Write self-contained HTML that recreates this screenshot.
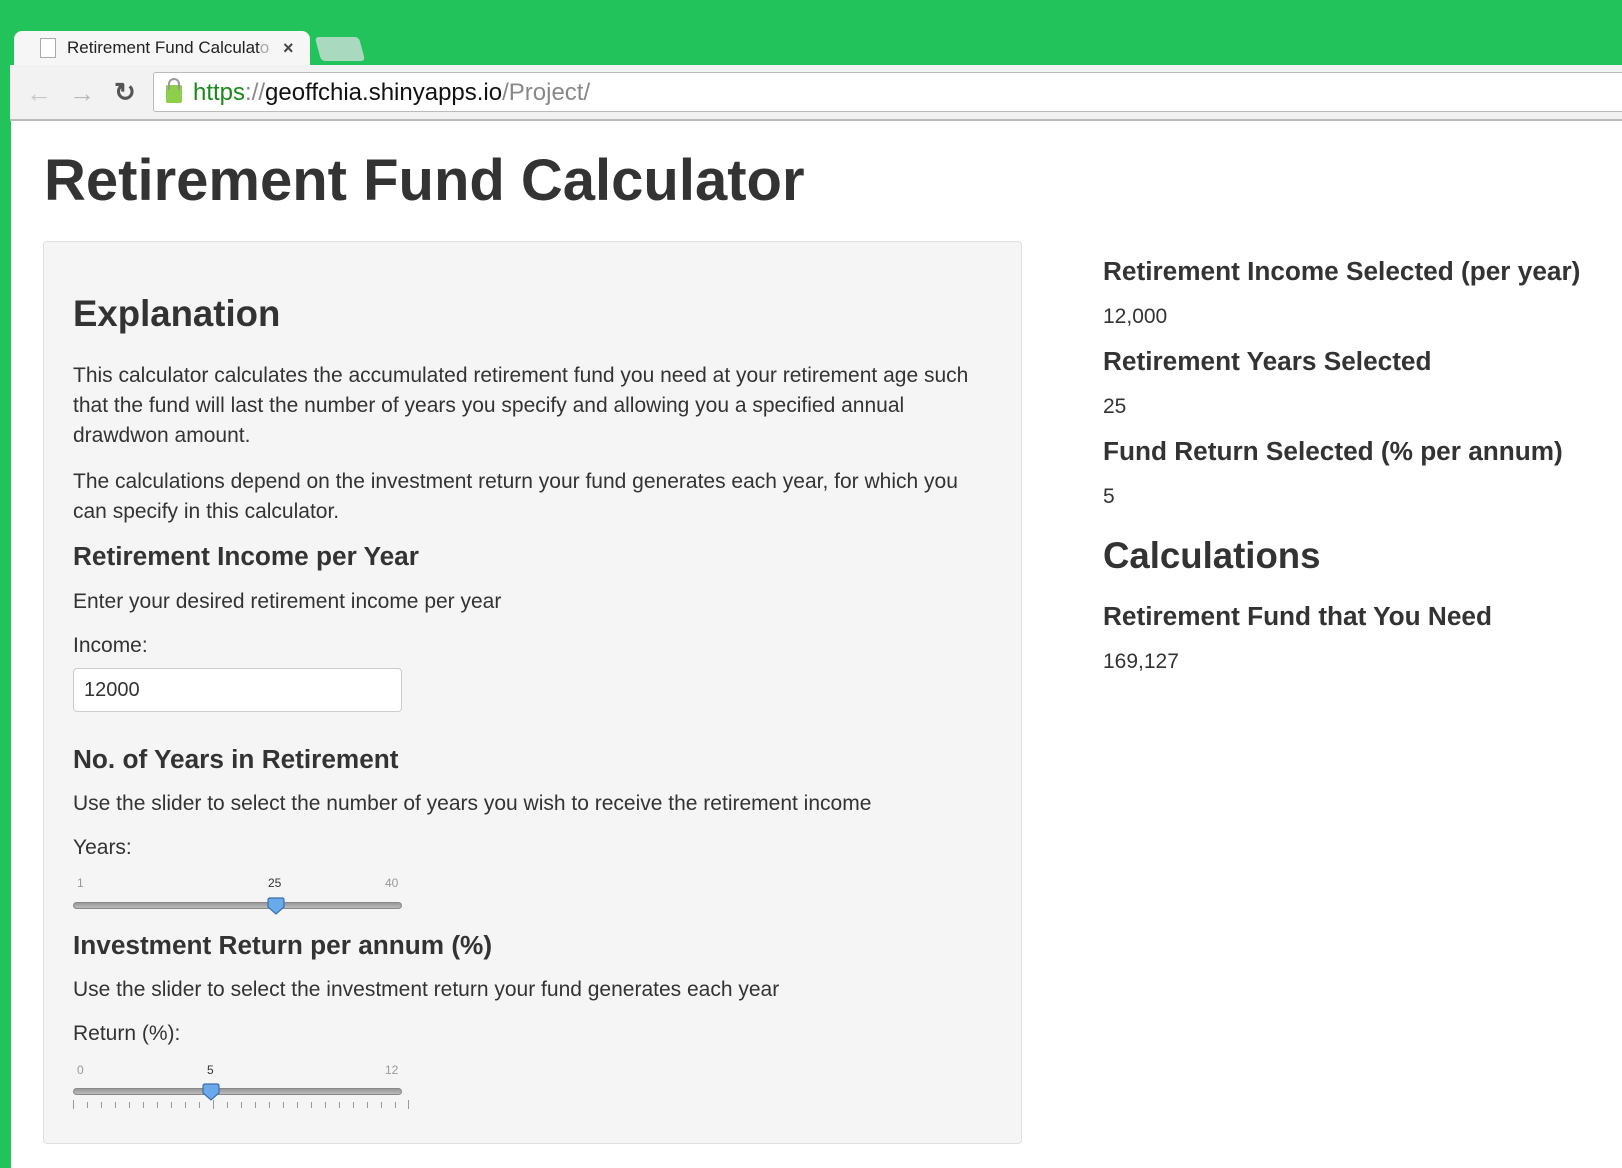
<!DOCTYPE html>
<html><head><meta charset="utf-8"><style>
*{margin:0;padding:0;box-sizing:border-box}
body{width:1622px;height:1168px;overflow:hidden;background:#22c35a;font-family:"Liberation Sans",sans-serif;color:#333;position:relative}
.a{position:absolute;white-space:nowrap}
.p{font-size:21px;line-height:30px;height:30px}
.h3{font-size:26.2px;font-weight:bold;line-height:30px;height:30px}
.h2{font-size:36.6px;font-weight:bold;line-height:44px}
.track{position:absolute;left:73px;width:329px;height:7px;border-radius:4px;background:linear-gradient(#999,#bbb);border:1px solid #888}
.hd{position:absolute;width:18px;height:18px}
.lb{position:absolute;font-size:12px;color:#999;line-height:14px}
</style></head><body>
<!-- tab -->
<div class="a" style="left:14px;top:31px;width:296px;height:36px;background:#f6f6f6;border-radius:8px 8px 0 0"></div>
<div class="a" style="left:40px;top:38px;width:16px;height:20px;border:1px solid #aaa;background:#fff"></div>
<div class="a" style="left:67px;top:36px;font-size:17px;line-height:24px;color:#222">Retirement Fund Calculat<span style="color:#aaa">o</span></div>
<div class="a" style="left:283px;top:36px;font-size:18px;line-height:24px;font-weight:bold;color:#444">×</div>
<div class="a" style="left:318px;top:37px;width:44px;height:24px;background:#a9d9be;border-radius:4px;transform:skewX(15deg)"></div>
<!-- toolbar -->
<div class="a" style="left:10px;top:65px;width:1612px;height:56px;background:#f2f2f2;border-bottom:2px solid #bbb"></div>
<div class="a" style="left:26px;top:78px;font-size:26px;color:#c8c8c8;line-height:30px">←</div>
<div class="a" style="left:69px;top:78px;font-size:26px;color:#b8b8b8;line-height:30px">→</div>
<div class="a" style="left:114px;top:77px;font-size:26px;color:#555;font-weight:bold;line-height:30px">↻</div>
<div class="a" style="left:153px;top:72px;width:1469px;height:40px;background:#fff;border:1px solid #bbb;border-right:none;border-radius:3px 0 0 3px"></div>
<div class="a" style="left:166px;top:85px;width:16px;height:18px;background:#8ccf4a;border-radius:2px"></div>
<div class="a" style="left:168px;top:78px;width:12px;height:12px;border:2px solid #999;border-bottom:none;border-radius:6px 6px 0 0"></div>
<div class="a" style="left:193px;top:78px;font-size:24px;line-height:30px;color:#111"><span style="color:#1a8a1a">https</span><span style="color:#888">://</span>geoffchia.shinyapps.io<span style="color:#888">/Project/</span></div>
<!-- page -->
<div class="a" style="left:11px;top:121px;width:1611px;height:1047px;background:#fff"></div>
<div class="a" style="left:44px;top:145px;font-size:58px;font-weight:bold;line-height:72px">Retirement Fund Calculator</div>
<div class="a" style="left:43px;top:241px;width:979px;height:903px;background:#f5f5f5;border:1px solid #e0e0e0;border-radius:4px"></div>
<div class="a h2" style="left:73px;top:292px">Explanation</div>
<div class="a p" style="left:73px;top:361px">This calculator calculates the accumulated retirement fund you need at your retirement age such</div>
<div class="a p" style="left:73px;top:391px">that the fund will last the number of years you specify and allowing you a specified annual</div>
<div class="a p" style="left:73px;top:421px">drawdwon amount.</div>
<div class="a p" style="left:73px;top:467px">The calculations depend on the investment return your fund generates each year, for which you</div>
<div class="a p" style="left:73px;top:497px">can specify in this calculator.</div>
<div class="a h3" style="left:73px;top:541px">Retirement Income per Year</div>
<div class="a p" style="left:73px;top:587px">Enter your desired retirement income per year</div>
<div class="a p" style="left:73px;top:631px">Income:</div>
<div class="a" style="left:73px;top:668px;width:329px;height:44px;background:#fff;border:1px solid #ccc;border-radius:4px;font-size:20px;line-height:42px;padding-left:10px">12000</div>
<div class="a h3" style="left:73px;top:744px">No. of Years in Retirement</div>
<div class="a p" style="left:73px;top:789px">Use the slider to select the number of years you wish to receive the retirement income</div>
<div class="a p" style="left:73px;top:833px">Years:</div>
<div class="lb" style="left:77px;top:876px">1</div>
<div class="lb" style="left:268px;top:876px;color:#333">25</div>
<div class="lb" style="left:385px;top:876px">40</div>
<div class="track" style="top:902px"></div>
<svg class="hd" style="left:267px;top:897px" viewBox="0 0 18 18"><path d="M1 3Q1 1 3 1H15Q17 1 17 3V10L9 17L1 10Z" fill="#6aa9ea" stroke="#3a6fae" stroke-width="1.2"/></svg>
<div class="a h3" style="left:73px;top:930px">Investment Return per annum (%)</div>
<div class="a p" style="left:73px;top:975px">Use the slider to select the investment return your fund generates each year</div>
<div class="a p" style="left:73px;top:1019px">Return (%):</div>
<div class="lb" style="left:77px;top:1063px">0</div>
<div class="lb" style="left:207px;top:1063px;color:#333">5</div>
<div class="lb" style="left:385px;top:1063px">12</div>
<div class="track" style="top:1088px"></div>
<svg class="hd" style="left:202px;top:1083px" viewBox="0 0 18 18"><path d="M1 3Q1 1 3 1H15Q17 1 17 3V10L9 17L1 10Z" fill="#6aa9ea" stroke="#3a6fae" stroke-width="1.2"/></svg>
<svg class="a" style="left:72px;top:1099px" width="340" height="12"><g stroke="#999" stroke-width="1">
<path d="M1.5 1v9M15.5 3v6M29.5 3v6M43.5 3v6M57.5 3v6M71.5 3v6M85.5 3v6M99.5 3v6M113.5 3v6M127.5 3v6M141.5 1v9M155.5 3v6M169.5 3v6M183.5 3v6M197.5 3v6M211.5 3v6M225.5 3v6M239.5 3v6M253.5 3v6M267.5 3v6M281.5 3v6M295.5 3v6M309.5 3v6M323.5 3v6M336.5 1v9"/></g></svg>
<!-- right -->
<div class="a h3" style="left:1103px;top:256px">Retirement Income Selected (per year)</div>
<div class="a p" style="left:1103px;top:302px">12,000</div>
<div class="a h3" style="left:1103px;top:346px">Retirement Years Selected</div>
<div class="a p" style="left:1103px;top:392px">25</div>
<div class="a h3" style="left:1103px;top:436px">Fund Return Selected (% per annum)</div>
<div class="a p" style="left:1103px;top:482px">5</div>
<div class="a h2" style="left:1103px;top:534px">Calculations</div>
<div class="a h3" style="left:1103px;top:601px">Retirement Fund that You Need</div>
<div class="a p" style="left:1103px;top:647px">169,127</div>
</body></html>
